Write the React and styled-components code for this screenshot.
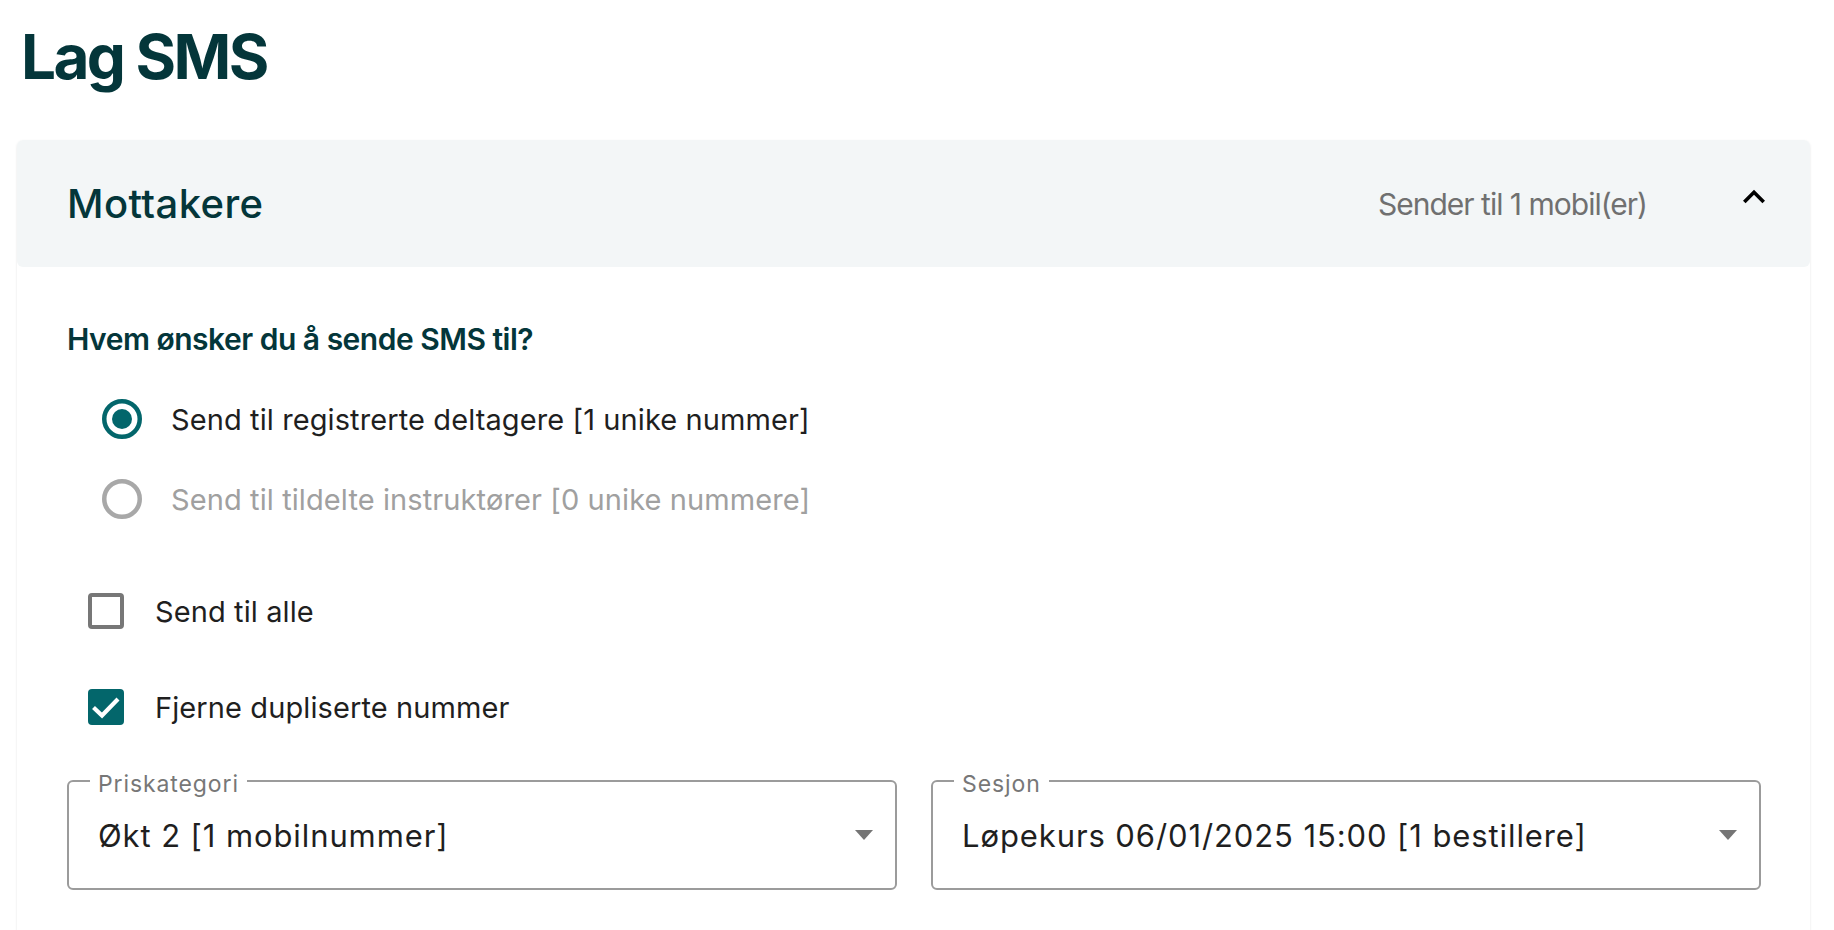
import React from "react";
import styled, { createGlobalStyle } from "styled-components";

const GlobalStyle = createGlobalStyle`
  html, body { margin: 0; padding: 0; background: #ffffff; }
  body { font-family: Inter, "Noto Sans", "Liberation Sans", sans-serif; color: #1f1f1f; }
  * { box-sizing: border-box; }
`;

const Page = styled.div`
  padding: 18px 24px 0 17px;
`;

const Title = styled.h1`
  margin: 0 0 45px 4px;
  font-size: 62px;
  line-height: 77px;
  font-weight: 700;
  color: #04363a;
  letter-spacing: -2.6px;
`;

const Card = styled.section`
  border-radius: 6px;
  background: #fff;
  box-shadow: 0 2px 1px -1px rgba(0, 0, 0, 0.12), 0 1px 1px 0 rgba(0, 0, 0, 0.08),
    0 1px 3px 0 rgba(0, 0, 0, 0.08);
  min-height: 900px;
`;

const Header = styled.div`
  display: flex;
  align-items: center;
  height: 127px;
  padding: 0 34px 0 50px;
  background: #f3f6f7;
  border-radius: 6px;
`;

const HeaderTitle = styled.h2`
  flex: 1;
  margin: 0;
  font-size: 40px;
  font-weight: 500;
  color: #04363a;
  letter-spacing: 0.4px;
`;

const HeaderInfo = styled.span`
  font-size: 30px;
  color: #707070;
  letter-spacing: -1px;
  margin-right: 85px;
`;

const ExpandIcon = styled.svg`
  width: 44px;
  height: 44px;
  margin-bottom: 14px;
  flex: none;
`;

const Body = styled.div`
  padding: 50px 49px 0 50px;
  display: flex;
  flex-direction: column;
`;

const Question = styled.h3`
  margin: 0 0 17px 0;
  height: 45px;
  line-height: 45px;
  font-size: 30px;
  font-weight: 600;
  color: #04363a;
  letter-spacing: -0.5px;
`;

const OptionGroup = styled.div`
  display: flex;
  flex-direction: column;
  padding-left: ${(p) => p.$indent}px;
  margin-top: ${(p) => p.$top || 0}px;
`;

const OptionRow = styled.label`
  display: flex;
  align-items: center;
  height: ${(p) => p.$h}px;
  gap: ${(p) => p.$gap}px;
  font-size: 29px;
  letter-spacing: 0.1px;
  color: ${(p) => (p.$disabled ? "#a0a0a0" : "#1f1f1f")};
`;

const RadioSvg = styled.svg`
  width: 40px;
  height: 40px;
  flex: none;
`;

const Box = styled.span`
  width: 36px;
  height: 36px;
  flex: none;
  border-radius: 4px;
  display: flex;
  align-items: center;
  justify-content: center;
  background: ${(p) => (p.$checked ? "#03666b" : "#fff")};
  border: ${(p) => (p.$checked ? "none" : "4px solid #777777")};
`;

const SelectRow = styled.div`
  display: grid;
  grid-template-columns: 1fr 1fr;
  gap: 34px;
  margin-top: 25px;
`;

const SelectBox = styled.div`
  position: relative;
  height: 110px;
  border: 2px solid #9b9b9b;
  border-radius: 6px;
  display: flex;
  align-items: center;
  padding: 0 22px 0 29px;
`;

const FloatLabel = styled.span`
  position: absolute;
  top: -12px;
  left: 21px;
  padding: 0 8px;
  background: #fff;
  font-size: 23px;
  line-height: 28px;
  color: #777777;
  letter-spacing: 0.9px;
`;

const SelectValue = styled.span`
  flex: 1;
  font-size: 31px;
  color: #1f1f1f;
  letter-spacing: 0.9px;
  white-space: nowrap;
`;

const Caret = styled.svg`
  width: 18px;
  height: 10px;
  flex: none;
`;

function Radio({ checked, disabled }) {
  const c = disabled ? "#a8a8a8" : "#03666b";
  return (
    <RadioSvg viewBox="0 0 40 40">
      <circle cx="20" cy="20" r="17.75" fill="none" stroke={c} strokeWidth="4.5" />
      {checked && <circle cx="20" cy="20" r="10" fill={c} />}
    </RadioSvg>
  );
}

function Checkbox({ checked }) {
  return (
    <Box $checked={checked}>
      {checked && (
        <svg width="36" height="36" viewBox="0 0 36 36">
          <path d="M5.5 18.5 L14 26.5 L30 10" fill="none" stroke="#fff" strokeWidth="4.2" />
        </svg>
      )}
    </Box>
  );
}

function Select({ label, value }) {
  return (
    <SelectBox>
      <FloatLabel>{label}</FloatLabel>
      <SelectValue>{value}</SelectValue>
      <Caret viewBox="0 0 18 10">
        <path d="M0 0 L18 0 L9 10 Z" fill="#757575" />
      </Caret>
    </SelectBox>
  );
}

export default function App() {
  return (
    <>
      <GlobalStyle />
      <Page>
        <Title>Lag SMS</Title>
        <Card>
          <Header>
            <HeaderTitle>Mottakere</HeaderTitle>
            <HeaderInfo>Sender til 1 mobil(er)</HeaderInfo>
            <ExpandIcon viewBox="0 0 24 24">
              <path d="M12 8l-6 6 1.41 1.41L12 10.83l4.59 4.58L18 14z" fill="#000" />
            </ExpandIcon>
          </Header>
          <Body>
            <Question>Hvem ønsker du å sende SMS til?</Question>
            <OptionGroup $indent={35}>
              <OptionRow $h={80} $gap={29}>
                <Radio checked />
                Send til registrerte deltagere [1 unike nummer]
              </OptionRow>
              <OptionRow $h={80} $gap={29} $disabled>
                <Radio disabled />
                Send til tildelte instruktører [0 unike nummere]
              </OptionRow>
            </OptionGroup>
            <OptionGroup $indent={21} $top={24}>
              <OptionRow $h={96} $gap={31}>
                <Checkbox />
                Send til alle
              </OptionRow>
              <OptionRow $h={96} $gap={31}>
                <Checkbox checked />
                Fjerne dupliserte nummer
              </OptionRow>
            </OptionGroup>
            <SelectRow>
              <Select label="Priskategori" value="Økt 2 [1 mobilnummer]" />
              <Select label="Sesjon" value="Løpekurs 06/01/2025 15:00 [1 bestillere]" />
            </SelectRow>
          </Body>
        </Card>
      </Page>
    </>
  );
}
